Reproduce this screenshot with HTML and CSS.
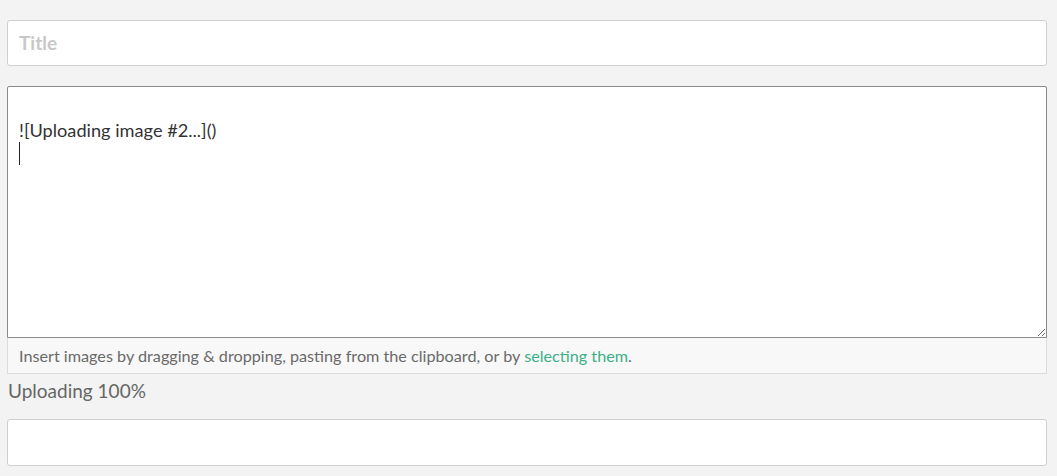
FILE: index.html
```html
<!DOCTYPE html>
<html lang="en">
<head>
  <meta charset="UTF-8" />
  <meta name="viewport" content="width=device-width, initial-scale=1.0"/>
  <title>New post</title>
  <link rel="stylesheet" href="styles.css">
</head>
<body>
  <div class="form">
    <input class="field title" type="text" placeholder="Title" />

    <div class="editor">
      <div class="editor-box">
        <textarea class="body-text" rows="10">

![Uploading image #2...]()
</textarea>
        <span class="caret"></span>
      </div>
      <p class="hint">Insert images by dragging &amp; dropping, pasting from the clipboard, or by <a href="#">selecting them</a>.</p>
    </div>

    <p class="status">Uploading 100%</p>

    <input class="field last" type="text" />
  </div>
</body>
</html>
```

FILE: styles.css
```css
body {
  font-family: Lato, "Open Sans", sans-serif;
  background-color: #f3f3f3;
  margin: 0;
  padding: 20px 10px 0 7px;
}
.form {
  display: flex;
  flex-direction: column;
}
.field {
  height: 46px;
  padding: 0 11px;
  border: 1px solid #cfcfcf;
  border-radius: 3px;
  background: white;
  font-family: inherit;
  font-size: 17px;
  color: #333;
  box-sizing: border-box;
  width: 100%;
  outline: none;
}
.field.last {
  height: 47px;
}
.title::placeholder {
  color: #c8c8c8;
  font-weight: bold;
  font-size: 19px;
}
.editor {
  margin-top: 20px;
}
.editor-box {
  position: relative;
}
.body-text {
  display: block;
  width: 100%;
  height: 252px;
  box-sizing: border-box;
  padding: 9px 11px;
  border: 1px solid #8a8a8a;
  border-radius: 2px 2px 0 0;
  background: white;
  font-family: inherit;
  font-size: 18.2px;
  line-height: 23px;
  color: #333;
  resize: vertical;
  outline: none;
}
.caret {
  position: absolute;
  left: 12px;
  top: 56px;
  width: 1px;
  height: 23px;
  background: #222;
}
.hint {
  margin: 0;
  padding: 8px 11px 8px;
  background: #f8f8f8;
  border: 1px solid #dcdcdc;
  border-top: none;
  font-size: 16.2px;
  line-height: 19px;
  color: #6a6a6a;
}
.hint a {
  color: #3daf88;
  text-decoration: none;
}
.status {
  margin: 5px 0 17px 1px;
  font-size: 19px;
  line-height: 23px;
  color: #666;
}
```
